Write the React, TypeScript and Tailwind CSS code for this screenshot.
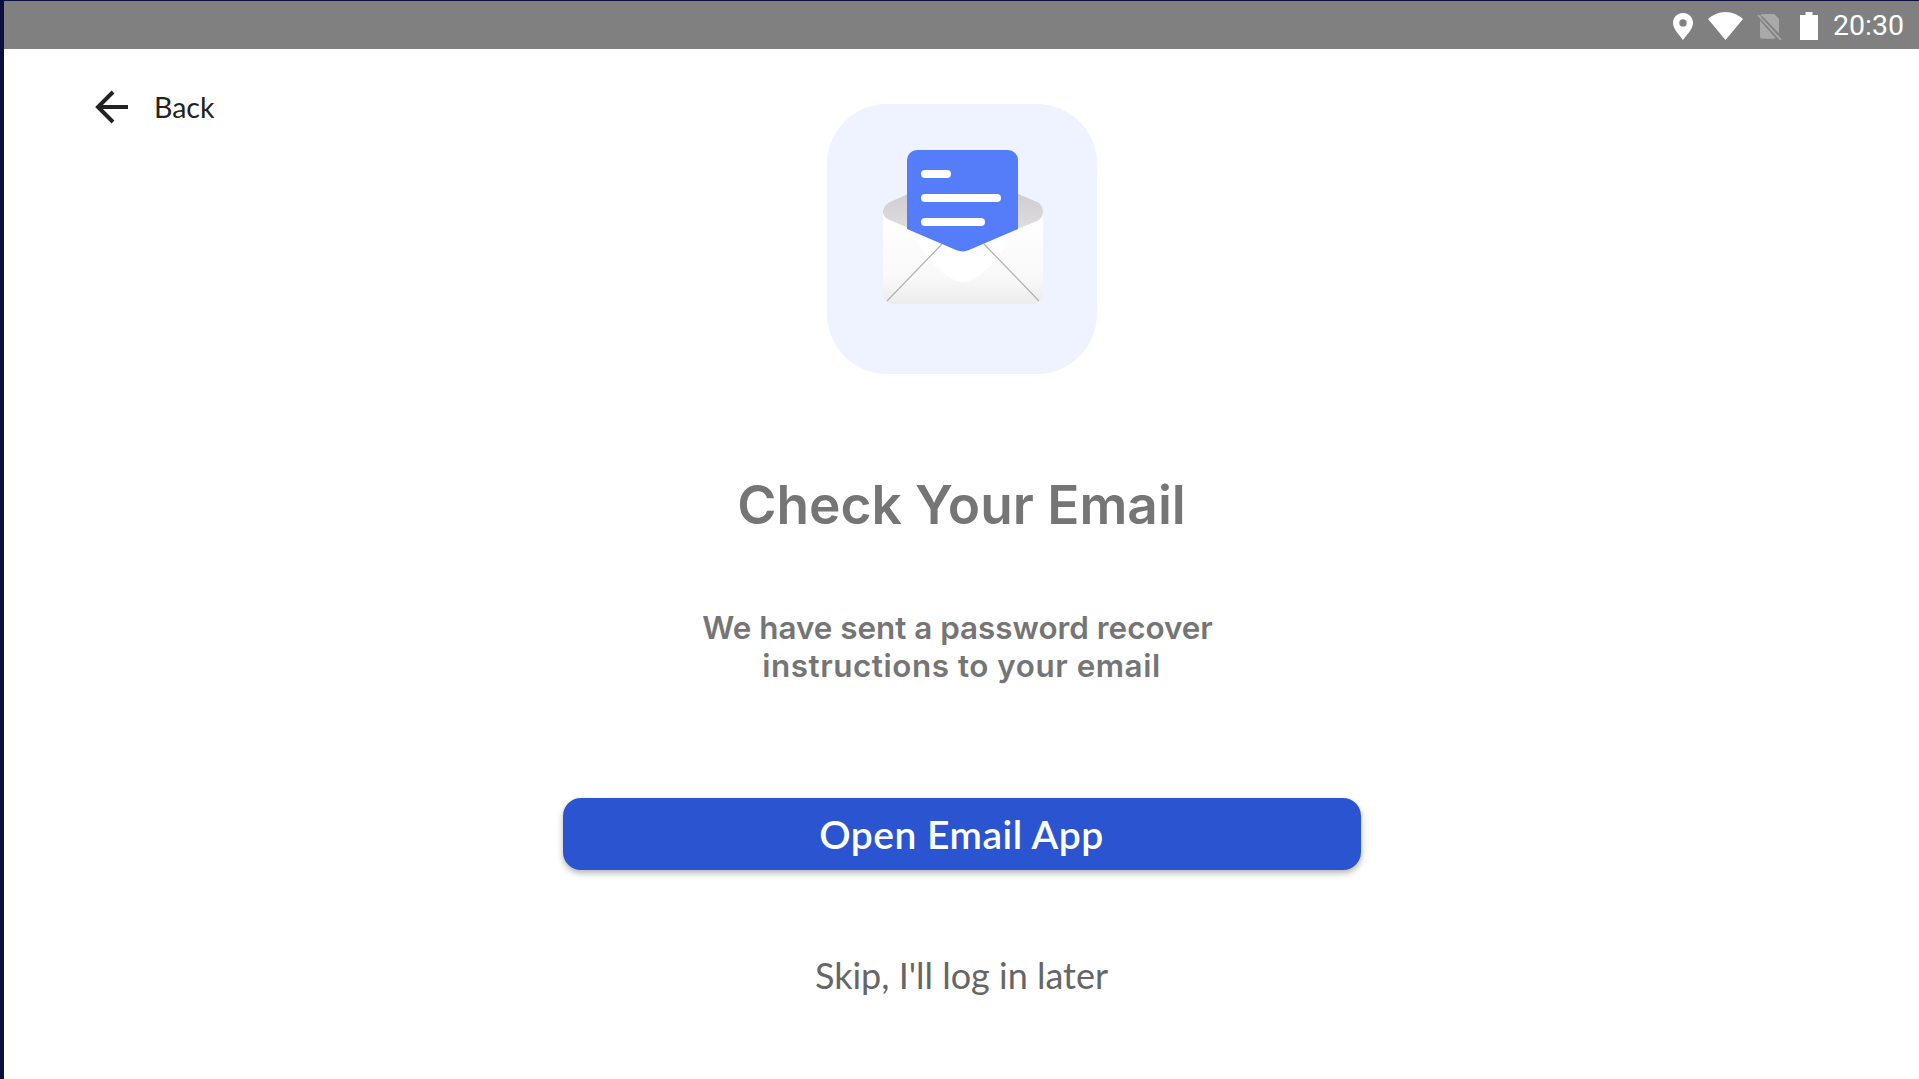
function StatusBar() {
  return (
    <div className="h-[48px] bg-[#808080] flex items-center justify-end pr-[15px] text-white">
      <svg width="20" height="27" viewBox="0 0 20 27" className="mr-[15px] mt-[2px]">
        <path
          fillRule="evenodd"
          fill="#fff"
          d="M10 0C4.400 0 0 4.300 0 9.800 0 16.500 7.500 23.200 10 27c2.500-3.800 10-10.500 10-17.200C20 4.300 15.600 0 10 0zm0 6.200a3.700 3.700 0 1 1 0 7.400 3.700 3.700 0 0 1 0-7.400z"
        />
      </svg>
      <svg width="35" height="28" viewBox="0 0 35 28" className="mr-[14px] mt-[2px]">
        <path fill="#fff" d="M17.500 28 0 7C4.500 3 10.500 0 17.500 0S30.500 3 35 7z" />
      </svg>
      <svg width="25" height="26" viewBox="0 0 25 26" className="mr-[18px] mt-[4px]">
        <path fill="#a9a9a9" d="M3.500 2A2 2 0 0 1 5.500 0h12l4.500 5v14.500L5 1.800 3.500 3.300zM3 6.500 18.500 24a2 2 0 0 1-1.500.700H5a2 2 0 0 1-2-2z" />
        <path stroke="#a9a9a9" strokeWidth="1.800" d="M1 1l23 25" />
      </svg>
      <svg width="18" height="28" viewBox="0 0 18 28" className="mr-[15px] mt-[2px]">
        <path fill="#fff" d="M5.500 0h7v3H18v25H0V3h5.500z" />
      </svg>
      <span className="text-[28.500px] leading-none mt-[3px] font-['Roboto',sans-serif]">20:30</span>
    </div>
  )
}

function BackArrow() {
  return (
    <svg width="34" height="34" viewBox="0 0 34 34" fill="none" stroke="#222" strokeWidth="4">
      <path d="M33 17H4" />
      <path d="M18 2 3 17l15 15" />
    </svg>
  )
}

function EnvelopeIcon() {
  return (
    <svg width="270" height="270" viewBox="0 0 270 270">
      <defs>
        <linearGradient id="flap" x1="0" y1="0" x2="0" y2="1">
          <stop offset="0" stopColor="#c6c3c6" />
          <stop offset="1" stopColor="#e8e6e8" />
        </linearGradient>
        <linearGradient id="body" x1="0" y1="0" x2="0" y2="1">
          <stop offset="0" stopColor="#ffffff" />
          <stop offset="0.7" stopColor="#f9f9f9" />
          <stop offset="1" stopColor="#ececec" />
        </linearGradient>
      </defs>
      <path fill="url(#body)" d="M56 108h160v81a11 11 0 0 1-11 11H67a11 11 0 0 1-11-11z" />
      <path fill="url(#flap)" d="M63 98 136 66l74 32c4 2 6 6 6 10s-2 7-6 9l-74 30-71-30c-6-2-9-5-9-9s3-8 7-10z" />
      <path fill="#ffffff" d="M91 125h90v12c0 8-28 41-45 41s-45-33-45-41z" />
      <path d="M115 140 60 197M157 140l55 57" stroke="#b0b0b0" strokeWidth="1.200" fill="none" />
      <path fill="#557dfa" d="M80 56a10 10 0 0 1 10-10h91a10 10 0 0 1 10 10v69l-49 21a16 16 0 0 1-13 0L80 125z" />
      <rect x="94" y="66" width="30" height="8" rx="4" fill="#fff" />
      <rect x="94" y="90" width="80" height="8" rx="4" fill="#fff" />
      <rect x="94" y="114" width="64" height="8" rx="4" fill="#fff" />
    </svg>
  )
}

export default function App() {
  return (
    <div className="h-[1079px] w-[1919px] overflow-hidden bg-[#0a0f3c] pl-[4px] pt-[1px]">
      <div className="h-full flex flex-col bg-white">
        <StatusBar />
        <div className="grid grid-cols-[1fr_270px_1fr] pt-[55px]">
          <button className="self-start justify-self-start ml-[91px] -mt-[18px] flex items-center gap-[25px] text-[#222]">
            <BackArrow />
            <span className="text-[28.5px] font-['Lato',sans-serif]">Back</span>
          </button>

          <div className="w-[270px] h-[270px] rounded-[60px] bg-[#eff3ff]">
            <EnvelopeIcon />
          </div>
        </div>

        <div className="flex flex-col items-center">
          <h1 className="mt-[95px] text-[53.2px] leading-[72px] font-semibold text-[#757575] font-['Inter',sans-serif]">
            Check Your Email
          </h1>

          <p className="mt-[68px] text-[31.400px] leading-[38px] font-semibold text-[#757575] text-center font-['Inter',sans-serif]">
            <span className="block whitespace-pre">We have sent a password recover </span>
            <span className="block tracking-[0.55px]">instructions to your email</span>
          </p>

          <button className="mt-[113px] w-[798px] h-[72px] rounded-[18px] bg-[#2b55d0] text-white text-[39px] tracking-[0.5px] font-semibold shadow-[0_3px_6px_rgba(0,0,0,0.3)] font-['Lato',sans-serif]">
            Open Email App
          </button>

          <div className="mt-[83px] text-[36px] leading-[44px] text-[#666] font-['Lato',sans-serif]">
            Skip, I'll log in later
          </div>
        </div>
      </div>
    </div>
  )
}
